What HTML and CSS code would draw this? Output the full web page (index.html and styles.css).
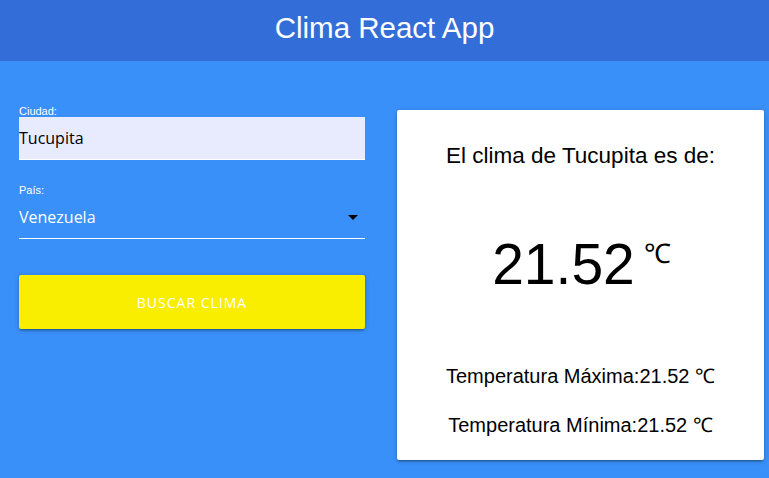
FILE: index.html
```html
<!DOCTYPE html>
<html lang="es">
<head>
<meta charset="utf-8">
<title>Clima React App</title>
<link rel="stylesheet" href="styles.css">
</head>
<body>
<header class="nav">
  <h1 class="brand">Clima React App</h1>
</header>
<main class="main">
  <form class="form">
    <div class="field">
      <label class="label" for="ciudad">Ciudad:</label>
      <input class="input" id="ciudad" type="text" value="Tucupita">
    </div>
    <div class="field field-select">
      <label class="label">País:</label>
      <div class="select">
        <span class="select-value">Venezuela</span>
        <svg class="caret" width="10" height="5" viewBox="0 0 10 5"><path d="M0 0 L10 0 L5 5 Z" fill="#000"/></svg>
      </div>
    </div>
    <button class="btn" type="button">BUSCAR CLIMA</button>
  </form>
  <section class="card">
    <h2 class="card-title">El clima de Tucupita es de:</h2>
    <p class="temp">21.52<span class="unit">℃</span></p>
    <p class="minmax">Temperatura Máxima:21.52 ℃</p>
    <p class="minmax min">Temperatura Mínima:21.52 ℃</p>
  </section>
</main>
</body>
</html>
```
FILE: styles.css
```css
html, body {
  margin: 0;
  padding: 0;
}
body {
  background: #3990f9;
  font-family: "Liberation Sans", Arial, sans-serif;
  height: 478px;
  overflow: hidden;
}
.nav {
  background: #336ed8;
  height: 61px;
  display: flex;
  align-items: center;
  justify-content: center;
}
.brand {
  margin: 0;
  color: #fff;
  font-weight: normal;
  font-size: 29.5px;
  line-height: 1;
  margin-top: -5px;
}
.main {
  display: flex;
  align-items: flex-start;
  padding: 49px 5px 0 19px;
  gap: 32px;
}
.form {
  width: 346px;
  display: flex;
  flex-direction: column;
  margin-top: -5px;
}
.field {
  display: flex;
  flex-direction: column;
}
.label {
  color: #fff;
  font-size: 11px;
  line-height: 12px;
}
.input {
  margin: 0;
  border: none;
  border-bottom: 1px solid #fff;
  background: #e8eafe;
  height: 43px;
  padding: 0;
  font-family: "Open Sans", "DejaVu Sans", sans-serif;
  font-size: 16px;
  color: #000;
  outline: none;
  box-sizing: border-box;
}
.field-select {
  margin-top: 24px;
}
.select {
  display: flex;
  align-items: center;
  justify-content: space-between;
  height: 43px;
  border-bottom: 1px solid #fff;
  box-sizing: border-box;
}
.select-value {
  color: #fff;
  font-family: "Open Sans", "DejaVu Sans", sans-serif;
  font-size: 16px;
}
.caret {
  margin-right: 7px;
}
.btn {
  margin-top: 36px;
  height: 54px;
  border: none;
  border-radius: 2px;
  background: #f9ed00;
  color: #fff;
  font-family: "Open Sans", "DejaVu Sans", sans-serif;
  font-size: 14px;
  letter-spacing: 1px;
  box-shadow: 0 2px 2px 0 rgba(0,0,0,0.14), 0 3px 1px -2px rgba(0,0,0,0.12), 0 1px 5px 0 rgba(0,0,0,0.2);
}
.card {
  width: 367px;
  height: 350px;
  background: #fff;
  border-radius: 2px;
  box-shadow: 0 2px 2px 0 rgba(0,0,0,0.14), 0 3px 1px -2px rgba(0,0,0,0.12), 0 1px 5px 0 rgba(0,0,0,0.2);
  display: flex;
  flex-direction: column;
  align-items: center;
  color: #000;
}
.card-title {
  margin: 34px 0 0;
  font-weight: normal;
  font-size: 22.5px;
  line-height: 24px;
}
.temp {
  margin: 64px 0 0 2px;
  font-size: 57px;
  line-height: 64px;
  display: flex;
  align-items: flex-start;
}
.unit {
  font-size: 27px;
  line-height: 27px;
  margin-left: 9px;
  margin-top: 9px;
}
.minmax {
  margin: 68px 0 0;
  font-size: 20px;
  line-height: 24px;
}
.minmax.min {
  margin-top: 25px;
}
```
